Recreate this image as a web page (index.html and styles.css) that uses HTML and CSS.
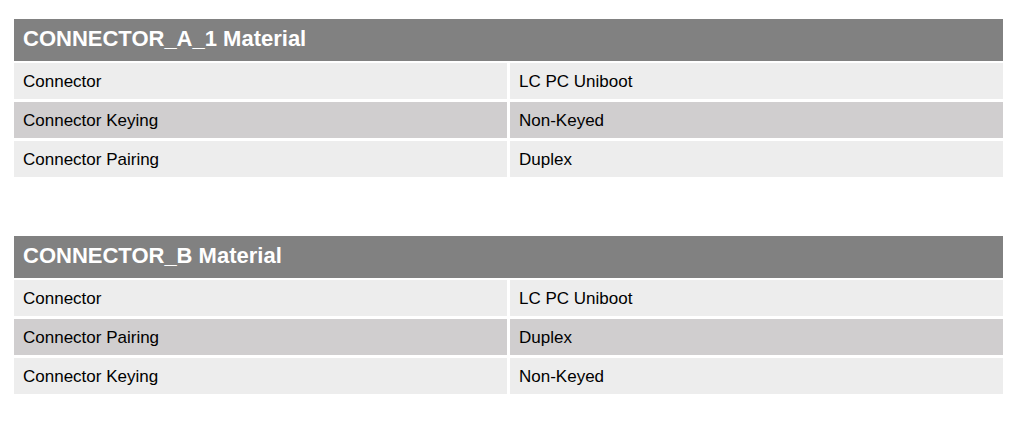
FILE: index.html
```html
<!DOCTYPE html>
<html lang="en">
<head>
<meta charset="utf-8">
<title>Connector Materials</title>
<link rel="stylesheet" href="styles.css">
</head>
<body>
<main class="page">
  <section class="spec">
    <h2 class="spec-title">CONNECTOR_A_1 Material</h2>
    <div class="spec-rows">
      <div class="cell light">Connector</div><div class="cell light">LC PC Uniboot</div>
      <div class="cell dark">Connector Keying</div><div class="cell dark">Non-Keyed</div>
      <div class="cell light">Connector Pairing</div><div class="cell light">Duplex</div>
    </div>
  </section>
  <section class="spec">
    <h2 class="spec-title">CONNECTOR_B Material</h2>
    <div class="spec-rows">
      <div class="cell light">Connector</div><div class="cell light">LC PC Uniboot</div>
      <div class="cell dark">Connector Pairing</div><div class="cell dark">Duplex</div>
      <div class="cell light">Connector Keying</div><div class="cell light">Non-Keyed</div>
    </div>
  </section>
</main>
</body>
</html>
```

FILE: styles.css
```css
html, body {
  margin: 0;
  padding: 0;
  background: #ffffff;
}
body {
  font-family: "Liberation Sans", Arial, sans-serif;
  color: #000000;
}
.page {
  padding: 19px 18px 0 14px;
  display: flex;
  flex-direction: column;
  gap: 59px;
}
.spec {
  display: flex;
  flex-direction: column;
  gap: 2px;
}
.spec-title {
  margin: 0;
  height: 42px;
  box-sizing: border-box;
  padding: 0 9px 3px;
  display: flex;
  align-items: center;
  background: #818181;
  color: #ffffff;
  font-size: 22px;
  font-weight: bold;
  line-height: 1;
}
.spec-rows {
  display: grid;
  grid-template-columns: 1fr 1fr;
  grid-auto-rows: 36px;
  gap: 3px;
}
.cell {
  display: flex;
  align-items: center;
  padding: 0 9px;
  font-size: 17px;
  line-height: 1;
}
.cell.light { background: #ededed; }
.cell.dark { background: #d0cecf; }
```
